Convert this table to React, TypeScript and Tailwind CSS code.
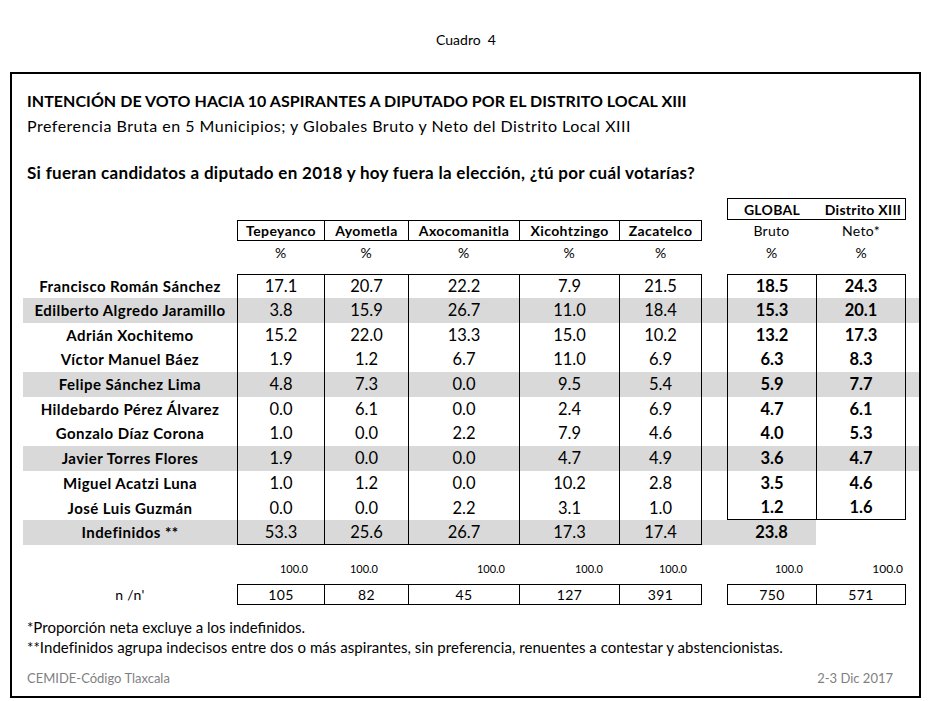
import React from "react";

type Row = { name: string; v: string[]; g: string; d: string; grey: boolean };

const rows: Row[] = [
  { name: "Francisco Román Sánchez", v: ["17.1", "20.7", "22.2", "7.9", "21.5"], g: "18.5", d: "24.3", grey: false },
  { name: "Edilberto Algredo Jaramillo", v: ["3.8", "15.9", "26.7", "11.0", "18.4"], g: "15.3", d: "20.1", grey: true },
  { name: "Adrián Xochitemo", v: ["15.2", "22.0", "13.3", "15.0", "10.2"], g: "13.2", d: "17.3", grey: false },
  { name: "Víctor Manuel Báez", v: ["1.9", "1.2", "6.7", "11.0", "6.9"], g: "6.3", d: "8.3", grey: false },
  { name: "Felipe Sánchez Lima", v: ["4.8", "7.3", "0.0", "9.5", "5.4"], g: "5.9", d: "7.7", grey: true },
  { name: "Hildebardo Pérez Álvarez", v: ["0.0", "6.1", "0.0", "2.4", "6.9"], g: "4.7", d: "6.1", grey: false },
  { name: "Gonzalo Díaz Corona", v: ["1.0", "0.0", "2.2", "7.9", "4.6"], g: "4.0", d: "5.3", grey: false },
  { name: "Javier Torres Flores", v: ["1.9", "0.0", "0.0", "4.7", "4.9"], g: "3.6", d: "4.7", grey: true },
  { name: "Miguel Acatzi Luna", v: ["1.0", "1.2", "0.0", "10.2", "2.8"], g: "3.5", d: "4.6", grey: false },
  { name: "José Luis Guzmán", v: ["0.0", "0.0", "2.2", "3.1", "1.0"], g: "1.2", d: "1.6", grey: false },
];

const heights = ["h-[24px]", "h-[25px]", "h-[24px]", "h-[25px]", "h-[25px]", "h-[24px]", "h-[25px]", "h-[25px]", "h-[25px]", "h-[24px]", "h-[25px]"];

const muniW = ["w-[87px]", "w-[84px]", "w-[111px]", "w-[100px]", "w-[83px]"];
const munis = ["Tepeyanco", "Ayometla", "Axocomanitla", "Xicohtzingo", "Zacatelco"];
const hundredPr = ["pr-[16px]", "pr-[30px]", "pr-[14px]", "pr-[16px]", "pr-[15px]"];
const ns = ["105", "82", "45", "127", "391"];

function muniCls(i: number) {
  return `${muniW[i]} shrink-0 border-l border-black flex items-center justify-center ${i === 4 ? "border-r" : ""}`;
}

export default function App() {
  return (
    <div className="w-[930px] h-[701px] bg-white text-black font-[Lato,sans-serif] overflow-hidden">
      <div className="pt-[31px] h-[49px] text-center text-[14px] leading-[18px] pl-[2px]">Cuadro&nbsp; 4</div>
      <div className="ml-[10px] mt-[23px] w-[911px] h-[626px] border-2 border-black flex flex-col">
        <div className="h-[17px] shrink-0" />
        <div className="h-[20px] pl-[15px] flex items-center text-[16px] font-bold tracking-[0.05px]">
          INTENCIÓN DE VOTO HACIA 10 ASPIRANTES A DIPUTADO POR EL DISTRITO LOCAL XIII
        </div>
        <div className="h-[20px] mt-[5px] pl-[15px] flex items-center text-[16px] tracking-[0.5px]">
          Preferencia Bruta en 5 Municipios; y Globales Bruto y Neto del Distrito Local XIII
        </div>
        <div className="h-[20px] mt-[27px] pl-[15px] flex items-center text-[17px] font-bold tracking-[0.3px]">
          Si fueran candidatos a diputado en 2018 y hoy fuera la elección, ¿tú por cuál votarías?
        </div>

        <div className="ml-[11px] mt-[15px] flex flex-col">
          {/* GLOBAL row */}
          <div className="flex h-[22px]">
            <div className="w-[214px] shrink-0" />
            <div className="w-[465px] shrink-0" />
            <div className="w-[25px] shrink-0" />
            <div className="w-[179px] shrink-0 flex border border-black text-[14px] font-bold tracking-[0.3px]">
              <div className="w-[88px] flex items-center justify-center">GLOBAL</div>
              <div className="w-[89px] pl-[5px] flex items-center justify-center whitespace-nowrap">Distrito XIII</div>
            </div>
          </div>
          {/* muni header row */}
          <div className="flex h-[21px] text-[14px]">
            <div className="w-[214px] shrink-0" />
            <div className="flex border-t border-b border-black font-bold tracking-[0.4px]">
              {munis.map((m, i) => (
                <div key={m} className={muniCls(i)}>{m}</div>
              ))}
            </div>
            <div className="w-[25px] shrink-0" />
            <div className="w-[89px] shrink-0 flex items-center justify-center tracking-[0.3px]">Bruto</div>
            <div className="w-[90px] shrink-0 flex items-center justify-center tracking-[0.3px]">Neto*</div>
          </div>
          {/* % row */}
          <div className="flex h-[22px] text-[14px] mb-[11px]">
            <div className="w-[214px] shrink-0" />
            {munis.map((m, i) => (
              <div key={m} className={`${muniW[i]} shrink-0 flex items-center justify-center`}>%</div>
            ))}
            <div className="w-[25px] shrink-0" />
            <div className="w-[89px] shrink-0 flex items-center justify-center">%</div>
            <div className="w-[90px] shrink-0 flex items-center justify-center">%</div>
          </div>

          {/* data rows */}
          {rows.map((r, ri) => (
            <div key={r.name} className={`flex ${heights[ri]} ${r.grey ? "bg-[#d9d9d9]" : ""}`}>
              <div className="w-[214px] shrink-0 flex items-center justify-center text-[15px] font-bold tracking-[0.45px]">
                {r.name}
              </div>
              <div className={`flex text-[16.5px] border-black ${ri === 0 ? "border-t" : ""}`}>
                {r.v.map((x, i) => (
                  <div key={i} className={muniCls(i)}>{x}</div>
                ))}
              </div>
              <div className="w-[25px] shrink-0" />
              <div className={`flex text-[16.5px] font-bold border-black ${ri === 0 ? "border-t" : ""} ${ri === 9 ? "border-b" : ""}`}>
                <div className="w-[89px] shrink-0 border-l border-black flex items-center justify-center">{r.g}</div>
                <div className="w-[90px] shrink-0 border-l border-r border-black flex items-center justify-center">{r.d}</div>
              </div>
            </div>
          ))}
          {/* Indefinidos */}
          <div className={`flex ${heights[10]}`}>
            <div className="w-[214px] shrink-0 bg-[#d9d9d9] flex items-center justify-center text-[15px] font-bold tracking-[0.45px]">
              Indefinidos **
            </div>
            <div className="flex text-[16.5px] border-b border-black bg-[#d9d9d9]">
              {["53.3", "25.6", "26.7", "17.3", "17.4"].map((x, i) => (
                <div key={i} className={muniCls(i)}>{x}</div>
              ))}
            </div>
            <div className="w-[25px] shrink-0 bg-[#d9d9d9]" />
            <div className="w-[89px] shrink-0 bg-[#d9d9d9] flex items-center justify-center text-[16.5px] font-bold">23.8</div>
          </div>

          {/* 100.0 row */}
          <div className="flex h-[16px] mt-[16px] text-[11px]">
            <div className="w-[214px] shrink-0" />
            {munis.map((m, i) => (
              <div key={m} className={`${muniW[i]} shrink-0 flex items-center justify-end ${hundredPr[i]}`}>100.0</div>
            ))}
            <div className="w-[25px] shrink-0" />
            <div className="w-[89px] shrink-0 flex items-center justify-end pr-[13px]">100.0</div>
            <div className="w-[90px] shrink-0 flex items-center justify-end pr-[3px] text-[12px]">100.0</div>
          </div>

          {/* n row */}
          <div className="flex h-[21px] mt-[7px] text-[14px] tracking-[0.3px]">
            <div className="w-[214px] shrink-0 flex items-center justify-center">n /n'</div>
            <div className="flex border-t border-b border-black">
              {ns.map((x, i) => (
                <div key={i} className={muniCls(i)}>{x}</div>
              ))}
            </div>
            <div className="w-[25px] shrink-0" />
            <div className="flex border border-black">
              <div className="w-[88px] shrink-0 flex items-center justify-center">750</div>
              <div className="w-[89px] shrink-0 border-l border-black flex items-center justify-center">571</div>
            </div>
          </div>
        </div>

        <div className="h-[20px] mt-[12px] pl-[15px] flex items-center text-[15px]">
          *Proporción neta excluye a los indefinidos.
        </div>
        <div className="h-[20px] pl-[15px] flex items-center text-[15px] tracking-[0.05px]">
          **Indefinidos agrupa indecisos entre dos o más aspirantes, sin preferencia, renuentes a contestar y abstencionistas.
        </div>
        <div className="h-[20px] mt-[12px] pl-[15px] pr-[26px] flex items-center justify-between text-[13px] text-[#7f7f7f]">
          <span>CEMIDE-Código Tlaxcala</span>
          <span>2-3 Dic 2017</span>
        </div>
      </div>
    </div>
  );
}
